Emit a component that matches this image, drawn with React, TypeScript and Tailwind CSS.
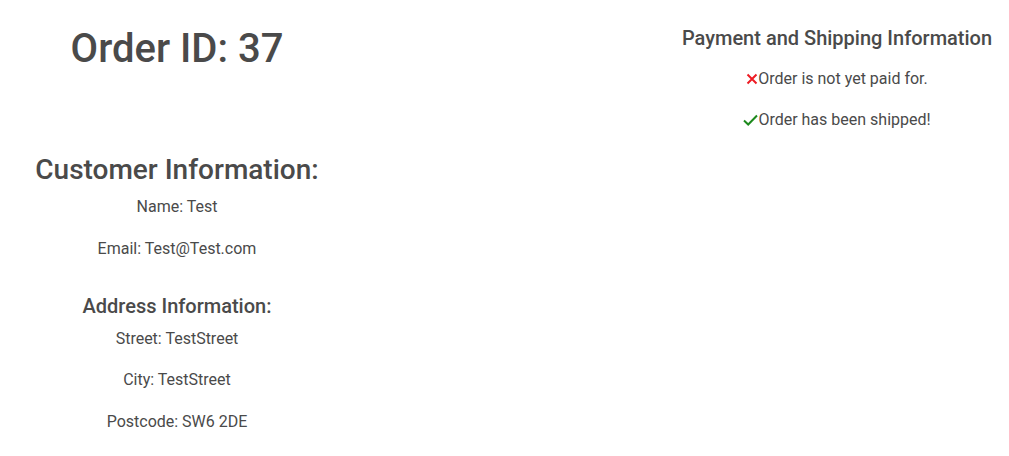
const font = { fontFamily: "Roboto, 'Liberation Sans', sans-serif" };

const CrossIcon = () => (
  <svg width="12" height="12" viewBox="0 0 12 12" className="shrink-0">
    <path d="M1.5 1.5 L10.5 10.5 M10.5 1.5 L1.5 10.5" stroke="#ee1c24" strokeWidth="2" strokeLinecap="butt" />
  </svg>
);

const CheckIcon = () => (
  <svg width="15" height="12" viewBox="0 0 15 12" className="shrink-0">
    <path d="M1 6.5 L5.2 10.5 L14 1.5" stroke="#1d8a1d" strokeWidth="2" fill="none" />
  </svg>
);

const App = () => {
  return (
    <div className="w-[1009px] h-[456px] bg-white text-[#4a4a4a] flex justify-between" style={font}>
      <div className="w-[354px] flex flex-col items-center">
        <h1 className="text-[40px] leading-[50px] font-medium mt-[24px]">Order ID: 37</h1>
        <h2 className="text-[28px] leading-[34px] font-medium mt-[79px]">Customer Information:</h2>
        <p className="text-[16px] leading-[24px] mt-[8px]">Name: Test</p>
        <p className="text-[16px] leading-[24px] mt-[18px]">Email: Test@Test.com</p>
        <h3 className="text-[20px] leading-[26px] font-medium mt-[32px]">Address Information:</h3>
        <p className="text-[16px] leading-[24px] mt-[8px]">Street: TestStreet</p>
        <p className="text-[16px] leading-[24px] mt-[17px]">City: TestStreet</p>
        <p className="text-[16px] leading-[24px] mt-[18px]">Postcode: SW6 2DE</p>
      </div>
      <div className="w-[344px] flex flex-col items-center">
        <h3 className="text-[20px] leading-[26px] font-medium mt-[25px]">Payment and Shipping Information</h3>
        <p className="text-[16px] leading-[24px] mt-[16px] flex items-center">
          <CrossIcon />
          Order is not yet paid for.
        </p>
        <p className="text-[16px] leading-[24px] mt-[17px] flex items-center">
          <CheckIcon />
          Order has been shipped!
        </p>
      </div>
    </div>
  );
};

export default App;
